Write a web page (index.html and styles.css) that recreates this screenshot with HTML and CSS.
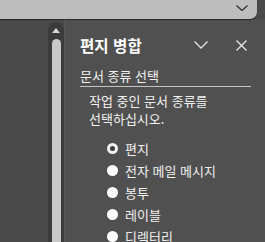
FILE: index.html
```html
<!DOCTYPE html>
<html lang="ko">
<head>
<meta charset="utf-8">
<link rel="stylesheet" href="styles.css">
</head>
<body>
<div class="topbar">
  <svg class="topchev" width="12" height="6" viewBox="0 0 12 6"><path d="M0.5 0.5 L6 5.5 L11.5 0.5" fill="none" stroke="#333" stroke-width="1.3"/></svg>
</div>
<div class="main">
  <div class="gutter"></div>
  <div class="scroll">
    <svg class="arrow" width="8" height="5" viewBox="0 0 8 5"><path d="M0 5 L4 0 L8 5 Z" fill="#d8d8d8"/></svg>
    <div class="thumb"></div>
  </div>
  <div class="panel">
    <div class="header">
      <span class="title">편지 병합</span>
      <svg class="hchev" width="14" height="8" viewBox="0 0 14 8"><path d="M0.5 0.5 L7 7 L13.5 0.5" fill="none" stroke="#e0e0e0" stroke-width="1.3"/></svg>
      <svg class="close" width="11" height="11" viewBox="0 0 11 11"><path d="M0.5 0.5 L10.5 10.5 M10.5 0.5 L0.5 10.5" fill="none" stroke="#e8e8e8" stroke-width="1.3"/></svg>
    </div>
    <div class="section">문서 종류 선택</div>
    <p class="desc">작업 중인 문서 종류를<br>선택하십시오.</p>
    <ul class="radios">
      <li><span class="radio on"></span>편지</li>
      <li><span class="radio"></span>전자 메일 메시지</li>
      <li><span class="radio"></span>봉투</li>
      <li><span class="radio"></span>레이블</li>
      <li><span class="radio"></span>디렉터리</li>
    </ul>
  </div>
</div>
</body>
</html>
```
FILE: styles.css
```css
html, body {
  margin: 0;
  padding: 0;
  height: 242px;
  overflow: hidden;
  background: #4a4a4a;
  font-family: "Noto Sans CJK KR", "Noto Sans", sans-serif;
  color: #f0f0f0;
}
.topbar {
  width: 257px;
  height: 19px;
  background: #bdbdbd;
  border-bottom-right-radius: 7px;
  box-shadow: 0 1px 1px rgba(0,0,0,0.5);
  display: flex;
  justify-content: flex-end;
  align-items: flex-start;
  position: relative;
  z-index: 1;
}
.topchev {
  margin: 5px 9px 0 0;
}
.main {
  display: flex;
  height: 223px;
}
.gutter {
  width: 48px;
  flex: none;
}
.scroll {
  width: 16px;
  flex: none;
  margin-top: 3px;
  background: #3b3b3b;
  border-radius: 8px 8px 0 0;
  display: flex;
  flex-direction: column;
  align-items: center;
}
.arrow {
  margin-top: 6px;
}
.thumb {
  margin-top: 6px;
  width: 9px;
  flex: 1;
  background: #c8c8c8;
  border-radius: 4.5px 4.5px 0 0;
}
.panel {
  flex: 1;
  background: #505050;
  border-left: 1px solid #585858;
  padding: 0 14px 0 15px;
}
.header {
  display: flex;
  align-items: center;
  height: 30px;
  margin-top: 11px;
}
.title {
  font-size: 15.6px;
  font-weight: bold;
  color: #ffffff;
  flex: 1;
}
.hchev {
  margin-right: 28px;
}
.close {
  margin-right: 4px;
}
.section {
  margin-top: 7px;
  font-size: 13px;
  line-height: 17px;
  padding-bottom: 2px;
  border-bottom: 1px solid #c4c4c4;
}
.desc {
  margin: 5px 0 0 9px;
  font-size: 13px;
  line-height: 18px;
}
.radios {
  list-style: none;
  margin: 9px 0 0 27px;
  padding: 0;
}
.radios li {
  display: flex;
  align-items: center;
  height: 22px;
  font-size: 13px;
}
.radio {
  width: 11px;
  height: 11px;
  border-radius: 50%;
  background: #ffffff;
  margin-right: 7px;
  box-sizing: border-box;
  flex: none;
}
.radio.on {
  background: #3c3c3c;
  border: 3px solid #f0f0f0;
}
```
